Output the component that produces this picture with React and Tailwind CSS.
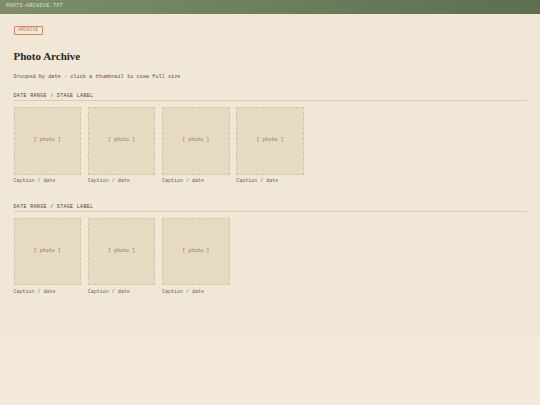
const groups = [
  { label: 'DATE RANGE / STAGE LABEL', count: 4 },
  { label: 'DATE RANGE / STAGE LABEL', count: 3 },
];

function Thumb() {
  return (
    <div className="w-[67.5px]">
      <div className="w-[67.5px] h-[67.5px] bg-[#e6dac3] border border-dashed border-[#d3c4a6] rounded-[1px] flex items-center justify-center">
        <span className="text-[5px] text-[#85796a]">[ photo ]</span>
      </div>
      <p className="mt-[2.5px] text-[5px] leading-[8px] text-[#6c6254]">Caption / date</p>
    </div>
  );
}

export default function App() {
  return (
    <div className="min-h-[405px] bg-[#f2e9db] font-['Liberation_Mono','DejaVu_Sans_Mono',monospace]">
      {/* Title bar */}
      <div className="h-[13.5px] flex items-center px-[6px] bg-gradient-to-r from-[#7c8e6a] to-[#5e6f50]">
        <span className="text-[5px] tracking-[0.35px] text-[#e4e2cc]">PHOTO-ARCHIVE.TXT</span>
      </div>

      <div className="bg-[#f1e7d6] px-[13.5px] pt-[12.5px] pb-[38px]">
        <div className="flex">
          <span className="flex items-center h-[9px] px-[3.5px] border border-[#d8866e] rounded-[1px] text-[4.5px] leading-none tracking-[0.2px] text-[#c9735c]">
            ARCHIVE
          </span>
        </div>

        <h1 className="mt-[14px] font-['Liberation_Serif',serif] font-bold text-[11px] leading-[14px] text-[#2b2520]">
          Photo Archive
        </h1>

        <p className="mt-[10px] text-[5.25px] leading-[8px] text-[#5a4f43]">
          Grouped by date · click a thumbnail to view full size
        </p>

        {groups.map((g, i) => (
          <section key={i} className={i === 0 ? 'mt-[11px]' : 'mt-[17.5px]'}>
            <div className="border-b border-[#d9ccb1] text-[5px] leading-[8px] tracking-[0.33px] text-[#4d4439]">
              {g.label}
            </div>
            <div className="mt-[6px] flex gap-[6.75px]">
              {Array.from({ length: g.count }).map((_, j) => (
                <Thumb key={j} />
              ))}
            </div>
          </section>
        ))}
      </div>
    </div>
  );
}
